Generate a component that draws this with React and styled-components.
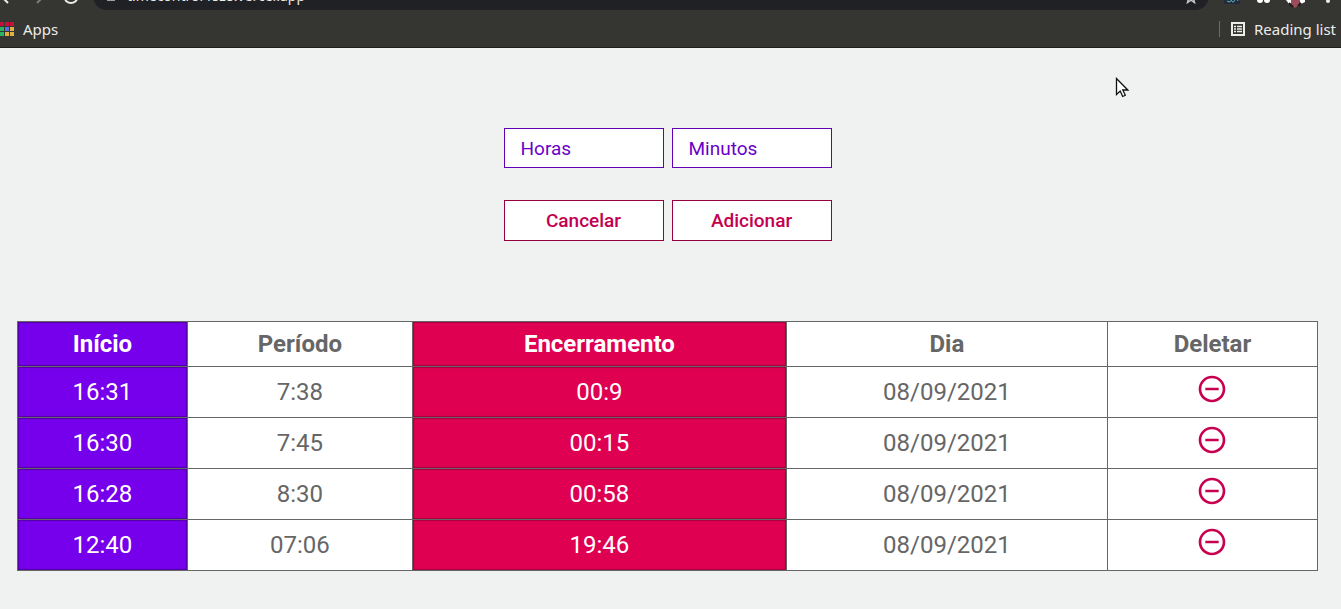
import React from "react";
import styled, { createGlobalStyle } from "styled-components";

const GlobalStyle = createGlobalStyle`
  *, *::before, *::after { box-sizing: border-box; }
  body {
    margin: 0;
    background: #f0f2f2;
    color: #666;
    font-family: Roboto, "Liberation Sans", sans-serif;
  }
`;

const Page = styled.div`
  min-height: 100vh;
  position: relative;
`;

const Browser = styled.header`
  height: 48px;
  background: #353532;
  border-bottom: 1px solid #231f20;
  color: #ececea;
  font: 15px/20px "Noto Sans", "Open Sans", sans-serif;
`;

const Toolbar = styled.div`
  height: 10px;
  display: flex;
  align-items: flex-end;
  overflow: hidden;
`;

const NavIcons = styled.svg`
  flex: none;
  width: 93px;
  height: 10px;
`;

const AddressBar = styled.div`
  flex: 1;
  height: 28px;
  padding: 0 12px;
  display: flex;
  align-items: center;
  gap: 10px;
  border-radius: 14px;
  background: #202124;
`;

const Lock = styled.svg`
  flex: none;
  width: 12px;
  height: 20px;
`;

const Url = styled.span`
  flex: 1;
  font-size: 14px;
`;

const Star = styled.svg`
  flex: none;
  width: 12px;
  height: 28px;
`;

const Extensions = styled.svg`
  flex: none;
  width: 132px;
  height: 10px;
`;

const Bookmarks = styled.nav`
  height: 37px;
  padding-right: 5px;
  display: flex;
  align-items: center;
  justify-content: space-between;
`;

const BookmarkLink = styled.a`
  display: flex;
  align-items: center;
  gap: 9px;
  color: inherit;
  text-decoration: none;
`;

const ReadingList = styled.button`
  display: flex;
  align-items: center;
  gap: 9px;
  height: 16px;
  padding: 0 0 0 11px;
  border: 0;
  border-left: 1px solid #6b6b68;
  background: none;
  color: inherit;
  font: inherit;
`;

const Main = styled.main`
  padding: 80px 23px 38px 17px;
`;

const Form = styled.form`
  display: grid;
  grid-template-columns: 160px 160px;
  justify-content: center;
  gap: 32px 8px;
  margin-bottom: 80px;
`;

const Field = styled.input`
  width: 100%;
  height: 40px;
  padding: 0 16px;
  border: 1px solid #6200b3;
  border-radius: 0;
  background: #fff;
  color: #6a00c8;
  font: 19px/24px Roboto, sans-serif;
  outline: none;

  &::placeholder {
    color: #6a00c8;
    opacity: 1;
  }
`;

const Action = styled.button`
  height: 41px;
  padding: 0;
  border: 1px solid #96003e;
  background: #fff;
  color: #c40050;
  font: 500 19px/24px Roboto, sans-serif;
  cursor: pointer;
`;

const Table = styled.table`
  width: 100%;
  table-layout: fixed;
  border-collapse: collapse;
  background: #fff;
  font-size: 24px;
  line-height: 28px;
  text-align: center;
`;

const Column = styled.col`
  width: ${({ $share }) => $share}%;
`;

const tones = {
  plain: { background: "#fff", color: "#666", edge: "transparent" },
  purple: { background: "#7600eb", color: "#fff", edge: "#5200a5" },
  crimson: { background: "#df0052", color: "#fff", edge: "#a5003d" },
};

const HeadCell = styled.th`
  height: 45px;
  padding: 0;
  border: 1px solid #666;
  background: ${({ $tone }) => tones[$tone].background};
  color: ${({ $tone }) => tones[$tone].color};
  box-shadow: inset 0 0 1px 1px ${({ $tone }) => tones[$tone].edge};
  font-weight: 700;
`;

const Cell = styled.td`
  height: 51px;
  padding: 0;
  border: 1px solid #666;
  background: ${({ $tone }) => tones[$tone].background};
  color: ${({ $tone }) => tones[$tone].color};
  box-shadow: inset 0 0 1px 1px ${({ $tone }) => tones[$tone].edge};
`;

const DeleteButton = styled.button`
  display: block;
  margin: 0 auto 6px;
  padding: 0;
  border: 0;
  background: none;
  color: #c80050;
  cursor: pointer;

  svg { display: block; }
`;

const Pointer = styled.svg`
  position: absolute;
  top: 77px;
  right: 212px;
  pointer-events: none;
`;

const columns = [
  { key: "start", label: "Início", tone: "purple", share: 13.07 },
  { key: "period", label: "Período", tone: "plain", share: 17.31 },
  { key: "end", label: "Encerramento", tone: "crimson", share: 28.77 },
  { key: "day", label: "Dia", tone: "plain", share: 24.69 },
  { key: "remove", label: "Deletar", tone: "plain", share: 16.16 },
];

const rows = [
  { start: "16:31", period: "7:38", end: "00:9", day: "08/09/2021" },
  { start: "16:30", period: "7:45", end: "00:15", day: "08/09/2021" },
  { start: "16:28", period: "8:30", end: "00:58", day: "08/09/2021" },
  { start: "12:40", period: "07:06", end: "19:46", day: "08/09/2021" },
];

const appDots = [
  ["#c8103c", "#c8103c", "#c8103c"],
  ["#28b463", "#5b6ee0", "#e0b040"],
  ["#28b463", "#e0b040", "#e0b040"],
];

function AppsIcon() {
  return (
    <svg width="14" height="14" viewBox="0 0 14 14" aria-hidden="true">
      {appDots.map((line, y) =>
        line.map((fill, x) => (
          <rect key={`${x}-${y}`} x={x * 5} y={y * 5} width="4" height="4" fill={fill} />
        ))
      )}
    </svg>
  );
}

function ListIcon() {
  return (
    <svg width="14" height="14" viewBox="0 0 14 14" fill="none" stroke="#ececea" aria-hidden="true">
      <rect x="1" y="1" width="12" height="12" strokeWidth="2" />
      <path d="M3 4.5h2M6 4.5h5M3 7h2M6 7h5M3 9.5h2M6 9.5h5" strokeWidth="1.4" />
    </svg>
  );
}

function RemoveIcon() {
  return (
    <svg width="32" height="32" viewBox="0 0 24 24" fill="currentColor" aria-hidden="true">
      <path d="M7 11v2h10v-2H7zm5-9C6.48 2 2 6.48 2 12s4.48 10 10 10 10-4.48 10-10S17.52 2 12 2zm0 18c-4.41 0-8-3.59-8-8s3.59-8 8-8 8 3.59 8 8-3.59 8-8 8z" />
    </svg>
  );
}

function BrowserBar() {
  return (
    <Browser>
      <Toolbar>
        <NavIcons viewBox="0 0 93 10" fill="none" strokeWidth="2" aria-hidden="true">
          <path d="M2-3l6 6" stroke="#ececea" />
          <path d="M43-3l-6 6" stroke="#7c7c79" />
          <path d="M65-2a6 5 0 0 0 12 0" stroke="#ececea" />
        </NavIcons>
        <AddressBar>
          <Lock viewBox="0 0 12 20" aria-hidden="true">
            <rect x="2" y="6" width="8" height="9" fill="#9aa0a6" />
          </Lock>
          <Url>timecontrol48z8.vercel.app</Url>
          <Star viewBox="0 0 12 28" fill="none" stroke="#c4c7c9" strokeWidth="1.5" aria-hidden="true">
            <path d="M6 9l1.500 4 4 .5-3 3 1 4L6 18.200 2.500 20.500l1-4-3-3 4-.5z" />
          </Star>
        </AddressBar>
        <Extensions viewBox="0 0 132 10" aria-hidden="true">
          <rect x="15" y="0" width="16" height="4" fill="#25293a" />
          <path d="M18 1q2 2 4 0M22 0q2 4 4 0t3 1" fill="none" stroke="#55b8c8" />
          <circle cx="51" cy="0" r="3" fill="#fff" />
          <circle cx="58" cy="0" r="3" fill="#fff" />
          <path d="M77 0h5v4h-2zM90 0h6v2l-4 2z" fill="#fff" />
          <path d="M82 0h9l-1 5-4 3-4-3z" fill="#9c4b5b" />
          <path d="M80 3l4 4M92 3l-3 3" stroke="#201d20" strokeWidth="2" />
          <circle cx="119" cy="1" r="2" fill="#ececea" />
        </Extensions>
      </Toolbar>
      <Bookmarks>
        <BookmarkLink href="#apps">
          <AppsIcon />
          Apps
        </BookmarkLink>
        <ReadingList type="button">
          <ListIcon />
          Reading list
        </ReadingList>
      </Bookmarks>
    </Browser>
  );
}

export default function App() {
  return (
    <Page>
      <GlobalStyle />
      <BrowserBar />
      <Main>
        <Form onSubmit={(event) => event.preventDefault()}>
          <Field type="text" placeholder="Horas" aria-label="Horas" />
          <Field type="text" placeholder="Minutos" aria-label="Minutos" />
          <Action type="reset">Cancelar</Action>
          <Action type="submit">Adicionar</Action>
        </Form>
        <Table>
          <colgroup>
            {columns.map((column) => (
              <Column key={column.key} $share={column.share} />
            ))}
          </colgroup>
          <thead>
            <tr>
              {columns.map((column) => (
                <HeadCell key={column.key} scope="col" $tone={column.tone}>
                  {column.label}
                </HeadCell>
              ))}
            </tr>
          </thead>
          <tbody>
            {rows.map((row) => (
              <tr key={row.start}>
                {columns.map((column) => (
                  <Cell key={column.key} $tone={column.tone}>
                    {column.key === "remove" ? (
                      <DeleteButton type="button" aria-label={`Deletar ${row.start}`}>
                        <RemoveIcon />
                      </DeleteButton>
                    ) : (
                      row[column.key]
                    )}
                  </Cell>
                ))}
              </tr>
            ))}
          </tbody>
        </Table>
      </Main>
      <Pointer width="14" height="22" viewBox="0 0 14 22" aria-hidden="true">
        <path
          d="M1.500 1.500v16l3.700-3.500 2.500 5.500 2.600-1.200-2.500-5.300h5z"
          fill="#fff"
          stroke="#111"
          strokeWidth="1.300"
        />
      </Pointer>
    </Page>
  );
}
